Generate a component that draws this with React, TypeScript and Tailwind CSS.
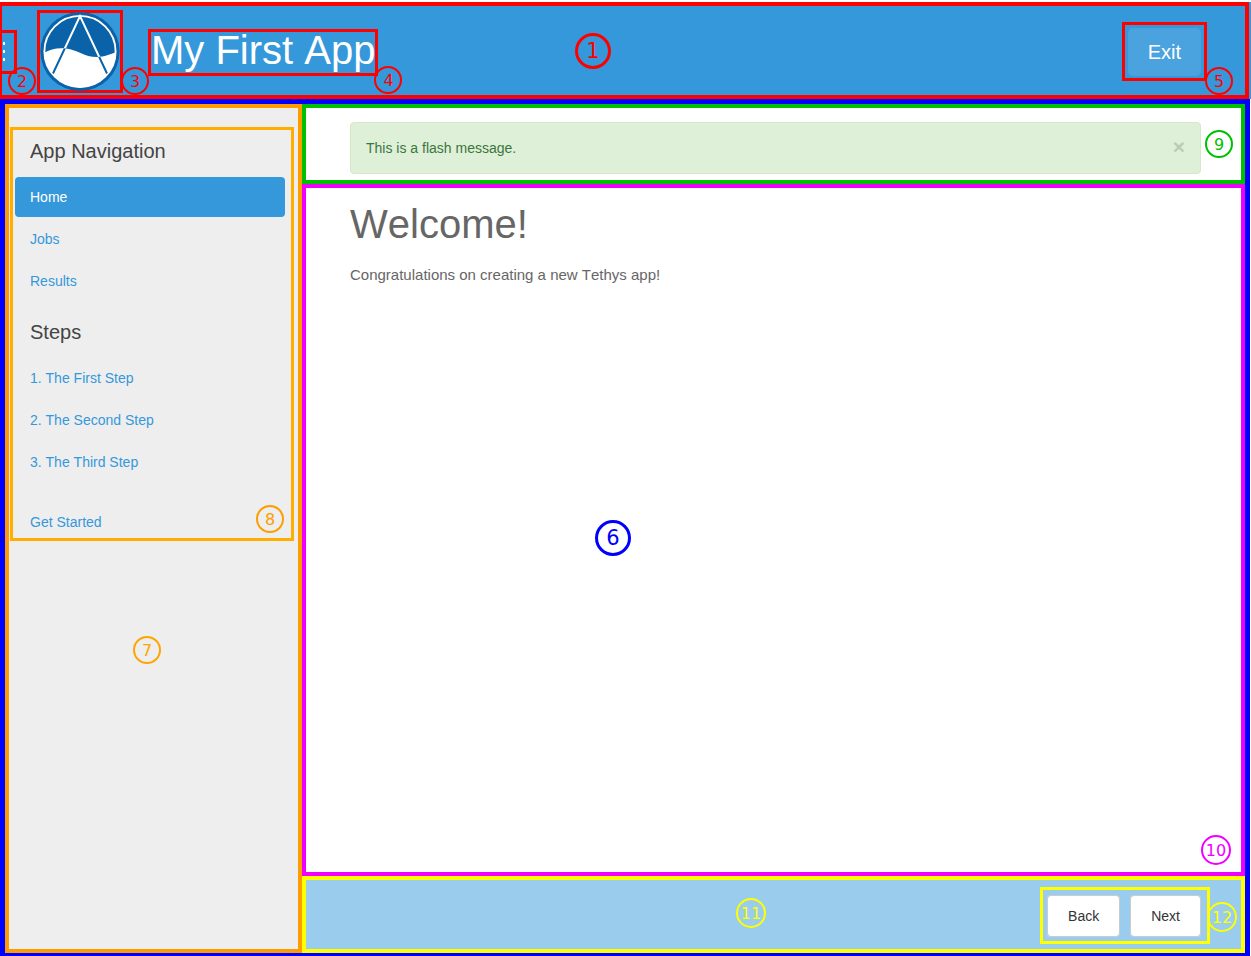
import React from "react";

type BadgeProps = { n: number; className: string };

function Badge({ n, className }: BadgeProps) {
  return (
    <span
      className={`absolute z-10 flex items-center justify-center rounded-full border-current pt-0.5 font-['DejaVu_Sans',sans-serif] ${className}`}
    >
      {n}
    </span>
  );
}

const small = "size-7 border-2 text-base";
const medium = "size-[30px] border-2 text-base";
const large = "size-9 border-3 text-[21px]";

function Logo() {
  const wave =
    "M44 53 C50 49 58 47.5 66 48.5 C78 50 84 57 97 57 C105 57 111 54 117 52 L117 90 L44 90 Z";
  return (
    <svg viewBox="40 13 80 77" className="h-[77px] w-20 overflow-visible" role="img" aria-label="App logo">
      <defs>
        <clipPath id="disc">
          <circle cx="80" cy="51.5" r="36" />
        </clipPath>
        <clipPath id="wave">
          <path d={wave} />
        </clipPath>
      </defs>
      <circle cx="80" cy="51.5" r="39.6" fill="#0a62a9" />
      <circle cx="80" cy="51.5" r="35.6" fill="none" stroke="#fff" strokeWidth="1.9" />
      <path d="M53 73.5 L80 16 L107 73.5" fill="none" stroke="#fff" strokeWidth="2" />
      <g clipPath="url(#disc)">
        <path d={wave} fill="#fff" />
      </g>
      <g clipPath="url(#wave)">
        <path d="M53 73.5 L80 16 L107 73.5" fill="none" stroke="#0a62a9" strokeWidth="2" />
      </g>
    </svg>
  );
}

function Header() {
  return (
    <div className="bg-[#3598db]">
      <header className="relative mr-[2px] flex h-[97px] items-center border-4 border-l-2 border-[#ff0000] pt-0.5 pr-[38px] text-[#ff0000]">
        <div className="relative h-11 w-[15px] border-3 border-l-0 border-[#ff0000]">
          <button type="button" aria-label="Toggle navigation" className="flex h-full flex-col justify-center gap-[5px] pl-px">
            <span className="h-[3px] w-[2px] bg-white" />
            <span className="h-[3px] w-[2px] bg-white" />
            <span className="h-[3px] w-[2px] bg-white" />
          </button>
          <Badge n={2} className={`top-[34px] left-[6px] ${small}`} />
        </div>
        <div className="relative ml-5 border-3 border-[#ff0000]">
          <Logo />
          <Badge n={3} className={`top-[54px] left-[81px] ${small}`} />
        </div>
        <div className="relative mt-0.5 ml-[25px] border-3 border-[#ff0000] pb-1">
          <h1 className="text-[40px] leading-[37px] whitespace-nowrap text-white">My First App</h1>
          <Badge n={4} className={`top-[34px] -right-[27px] ${small}`} />
        </div>
        <div className="relative ml-auto border-3 border-[#ff0000] px-[3px] pt-[3px] pb-[2px]">
          <button type="button" className="block h-12 rounded-[5px] bg-[#4aa2df] px-5 text-xl text-white">
            Exit
          </button>
          <Badge n={5} className={`top-[42px] -right-[29px] ${small}`} />
        </div>
        <Badge n={1} className={`top-[27px] left-[573px] ${large}`} />
      </header>
    </div>
  );
}

function NavItem({ label, active = false }: { label: string; active?: boolean }) {
  return (
    <li>
      <a
        href="#"
        aria-current={active ? "page" : undefined}
        className={`flex h-10 items-center rounded px-[15px] ${active ? "bg-[#3598db] text-white" : "text-[#3598db]"}`}
      >
        {label}
      </a>
    </li>
  );
}

function Sidebar() {
  return (
    <aside className="relative w-[297px] shrink-0 border-4 border-[#ff9d00] bg-[#eeeeee] pt-[19px] pr-1 pl-px">
      <nav className="relative border-3 border-[#ffae00] pr-1.5 pl-0.5 text-sm">
        <h2 className="mb-[5px] flex h-[42px] items-center pl-[15px] text-xl text-[#444444]">App Navigation</h2>
        <ul className="flex flex-col gap-0.5">
          <NavItem label="Home" active />
          <NavItem label="Jobs" />
          <NavItem label="Results" />
        </ul>
        <h2 className="mt-2.5 mb-[5px] flex h-[42px] items-center pl-[15px] text-xl text-[#444444]">Steps</h2>
        <ul className="flex flex-col gap-0.5">
          <NavItem label="1. The First Step" />
          <NavItem label="2. The Second Step" />
          <NavItem label="3. The Third Step" />
        </ul>
        <a href="#" className="mt-6 flex h-8 items-center px-[15px] text-[#3598db]">
          Get Started
        </a>
        <Badge n={8} className={`right-[7px] bottom-[5px] text-[#ff9d00] ${small}`} />
      </nav>
      <Badge n={7} className={`top-[528px] left-[124px] text-[#ffa500] ${small}`} />
    </aside>
  );
}

function FlashMessage() {
  return (
    <div className="relative border-4 border-[#00c000] pt-3.5 pr-10 pb-1.5 pl-11">
      <div role="alert" className="flex h-[52px] items-center justify-between rounded border border-[#d6e9c6] bg-[#dff0d8] px-[15px] text-sm text-[#3c763d]">
        <span>This is a flash message.</span>
        <button type="button" aria-label="Close" className="pb-1 text-[21px] leading-none font-bold text-[#b9cdb4]">
          ×
        </button>
      </div>
      <Badge n={9} className={`top-[22px] right-2 text-[#00c000] ${small}`} />
    </div>
  );
}

const actionButton = "h-[42px] rounded border border-[#cccccc] bg-white px-5 text-sm text-[#333333]";

function Actions() {
  return (
    <footer className="relative flex h-[77px] items-start justify-end border-4 border-[#ffff00] bg-[#9acced] pt-[7px] pr-[31px] text-[#ffff00]">
      <div className="relative flex gap-2.5 border-3 border-[#ffff00] pt-[5px] pr-1.5 pb-1 pl-1">
        <button type="button" className={actionButton}>
          Back
        </button>
        <button type="button" className={actionButton}>
          Next
        </button>
        <Badge n={12} className={`top-3 -right-[30px] ${medium}`} />
      </div>
      <Badge n={11} className={`top-[18px] left-[430px] ${medium}`} />
    </footer>
  );
}

export default function App() {
  return (
    <div className="flex min-h-screen flex-col bg-white pt-[2px] font-['Liberation_Sans',Arial,sans-serif] [font-kerning:none]">
      <Header />
      <div className="relative mr-px flex grow border-5 border-b-[3px] border-[#0000ff]">
        <Sidebar />
        <div className="flex min-w-0 grow flex-col">
          <FlashMessage />
          <main className="relative grow border-4 border-[#f000ff] pt-3.5 pr-10 pl-11 text-[#666666]">
            <h2 className="text-[40px] leading-[44px]">Welcome!</h2>
            <p className="mt-[19px] text-[15px] leading-5">Congratulations on creating a new Tethys app!</p>
            <Badge n={10} className={`right-2.5 bottom-[7px] text-[#f000ff] ${medium}`} />
          </main>
          <Actions />
        </div>
        <Badge n={6} className={`top-[416px] left-[590px] text-[#0000ff] ${large}`} />
      </div>
    </div>
  );
}
